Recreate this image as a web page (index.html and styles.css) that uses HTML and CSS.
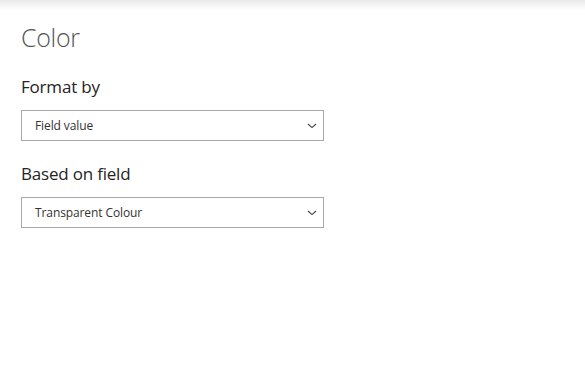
FILE: index.html
```html
<!DOCTYPE html>
<html>
<head>
<meta charset="utf-8">
<link rel="stylesheet" href="styles.css">
</head>
<body>
<div class="topshade"></div>
<main class="panel">
  <h1 class="title">Color</h1>
  <section class="field">
    <div class="label">Format by</div>
    <div class="select"><span>Field value</span>
      <svg class="chev" width="10" height="6" viewBox="0 0 10 6"><path d="M1 1 L5 4.6 L9 1" fill="none" stroke="#444" stroke-width="1.1"/></svg>
    </div>
  </section>
  <section class="field">
    <div class="label">Based on field</div>
    <div class="select"><span>Transparent Colour</span>
      <svg class="chev" width="10" height="6" viewBox="0 0 10 6"><path d="M1 1 L5 4.6 L9 1" fill="none" stroke="#444" stroke-width="1.1"/></svg>
    </div>
  </section>
</main>
</body>
</html>
```
FILE: styles.css
```css
html, body { margin: 0; padding: 0; background: #fff; }
body { font-family: "Open Sans", "Noto Sans", sans-serif; width: 585px; height: 377px; overflow: hidden; }
.topshade { height: 10px; background: linear-gradient(#e9e9e9, #fff); }
.panel { padding: 0 0 0 21px; margin-top: 10px; }
.title { margin: 0; font-weight: 300; font-size: 25px; line-height: 34px; color: #555; letter-spacing: -0.3px; }
.field { margin-top: 21px; }
.field + .field { margin-top: 21px; }
.label { font-size: 17px; line-height: 24px; color: #252423; letter-spacing: -0.2px; }
.select { margin-top: 11px; height: 29px; border: 1px solid #a8a8a8; display: flex; align-items: center; justify-content: space-between; padding: 0 6px 0 13px; box-sizing: content-box; width: 282px; }
.select span { font-size: 12px; color: #333; letter-spacing: -0.1px; }
.chev { display: block; margin-top: 1px; }
```
